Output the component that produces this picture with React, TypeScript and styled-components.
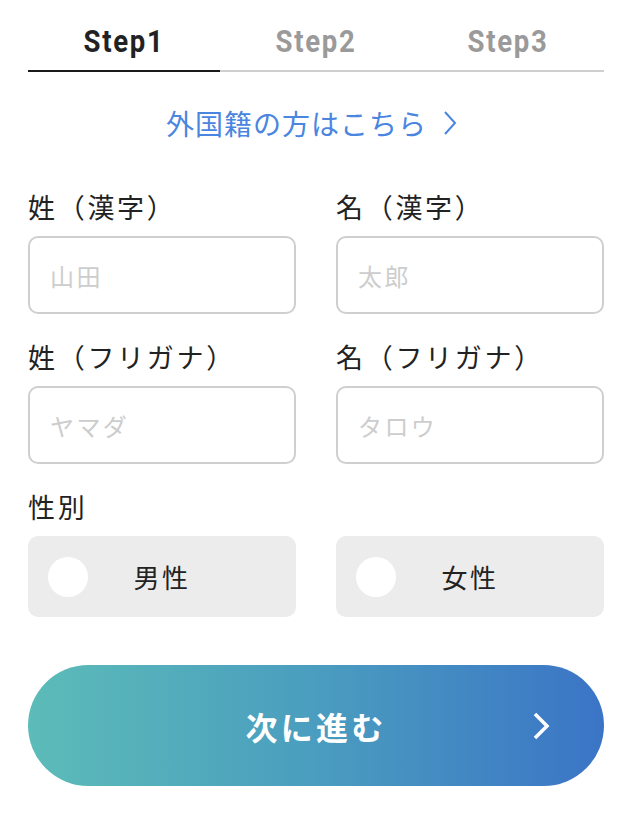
import styled, { createGlobalStyle } from 'styled-components';

const GlobalStyle = createGlobalStyle`
  * {
    box-sizing: border-box;
  }
  body {
    margin: 0;
    background: #fff;
    font-family: 'Noto Sans CJK JP', 'Noto Sans', sans-serif;
    color: #222;
  }
`;

const steps = ['Step1', 'Step2', 'Step3'];

const nameFields = [
  { label: '姓（漢字）', placeholder: '山田' },
  { label: '名（漢字）', placeholder: '太郎' },
  { label: '姓（フリガナ）', placeholder: 'ヤマダ' },
  { label: '名（フリガナ）', placeholder: 'タロウ' },
];

const App = () => {
  return (
    <>
      <GlobalStyle />
      <Page>
        <Tabs>
          {steps.map((s, i) => (
            <Tab key={s} $active={i === 0}>
              <TabText>{s}</TabText>
            </Tab>
          ))}
        </Tabs>

        <ForeignLink href="#">
          外国籍の方はこちら
          <svg width="14" height="24" viewBox="0 0 14 24">
            <polyline points="2,1 12,12 2,23" fill="none" stroke="#4a85e0" strokeWidth="2" />
          </svg>
        </ForeignLink>

        <FieldGrid>
          {nameFields.map((f) => (
            <Field key={f.label}>
              <Label>{f.label}</Label>
              <Input type="text" placeholder={f.placeholder} />
            </Field>
          ))}
        </FieldGrid>

        <Field>
          <Label>性別</Label>
          <RadioRow>
            <RadioBox>
              <Circle />
              男性
            </RadioBox>
            <RadioBox>
              <Circle />
              女性
            </RadioBox>
          </RadioRow>
        </Field>

        <NextButton type="button">
          次に進む
          <ButtonArrow width="18" height="28" viewBox="0 0 18 28">
            <polyline points="3,2 15,14 3,26" fill="none" stroke="#fff" strokeWidth="3.5" />
          </ButtonArrow>
        </NextButton>
      </Page>
    </>
  );
};

export default App;

const Page = styled.div`
  width: 632px;
  padding: 0 28px 30px;
  display: flex;
  flex-direction: column;
`;

const Tabs = styled.div`
  display: grid;
  grid-template-columns: repeat(3, 1fr);
`;

const Tab = styled.div<{ $active?: boolean }>`
  height: 72px;
  padding-bottom: 13px;
  display: flex;
  align-items: flex-end;
  justify-content: center;
  border-bottom: 2px solid ${({ $active }) => ($active ? '#1a1a1a' : '#cfcfcf')};
  color: ${({ $active }) => ($active ? '#222' : '#9a9a9a')};
`;

const TabText = styled.span`
  display: inline-block;
  font-family: Roboto, 'Liberation Sans', sans-serif;
  font-weight: 700;
  font-size: 32px;
  line-height: 32px;
  letter-spacing: 2px;
  transform: scaleX(0.86);
`;

const ForeignLink = styled.a`
  margin-top: 33px;
  margin-right: 9px;
  align-self: center;
  display: flex;
  align-items: center;
  gap: 16px;
  color: #4a85e0;
  text-decoration: none;
  font-size: 28px;
  line-height: 36px;
  letter-spacing: 1px;
`;

const FieldGrid = styled.div`
  margin-top: 48px;
  display: grid;
  grid-template-columns: 1fr 1fr;
  column-gap: 40px;
  row-gap: 25px;
  margin-bottom: 25px;
`;

const Field = styled.div`
  display: flex;
  flex-direction: column;
  gap: 11px;
`;

const Label = styled.div`
  font-size: 27px;
  line-height: 36px;
  letter-spacing: 0.1em;
  color: #222;
`;

const Input = styled.input`
  width: 100%;
  height: 78px;
  border: 2px solid #cfcfcf;
  border-radius: 10px;
  padding: 0 20px;
  font-family: 'Noto Sans CJK JP', 'Noto Sans', sans-serif;
  font-size: 24px;
  letter-spacing: 0.1em;
  color: #222;
  outline: none;
  &::placeholder {
    color: #cdcdcd;
  }
`;

const RadioRow = styled.div`
  display: grid;
  grid-template-columns: 1fr 1fr;
  column-gap: 40px;
`;

const RadioBox = styled.label`
  position: relative;
  height: 81px;
  border-radius: 10px;
  background: #ececec;
  display: flex;
  align-items: center;
  justify-content: center;
  font-size: 26px;
  letter-spacing: 0.1em;
  color: #222;
  cursor: pointer;
`;

const Circle = styled.span`
  position: absolute;
  left: 20px;
  top: 50%;
  margin-top: -20px;
  width: 40px;
  height: 40px;
  border-radius: 50%;
  background: #fff;
`;

const NextButton = styled.button`
  position: relative;
  margin-top: 48px;
  height: 121px;
  width: 100%;
  border: none;
  border-radius: 61px;
  background: linear-gradient(90deg, #5cbcb8 0%, #4a9dbf 50%, #3b74c6 100%);
  color: #fff;
  font-family: 'Noto Sans CJK JP', 'Noto Sans', sans-serif;
  font-weight: 700;
  font-size: 32px;
  letter-spacing: 0.1em;
  display: flex;
  align-items: center;
  justify-content: center;
  cursor: pointer;
`;

const ButtonArrow = styled.svg`
  position: absolute;
  right: 54px;
  top: 50%;
  margin-top: -14px;
`;
